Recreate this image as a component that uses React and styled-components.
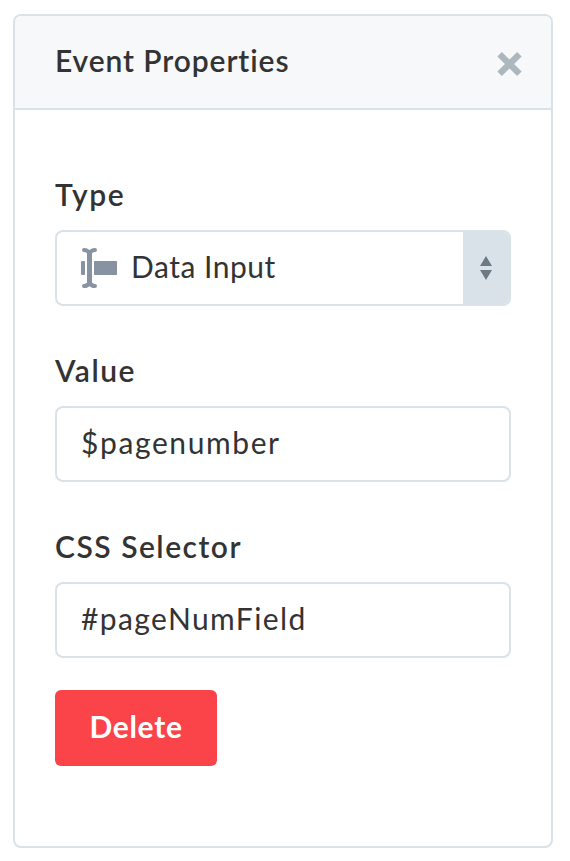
import React from "react";
import styled, { createGlobalStyle } from "styled-components";

const GlobalStyle = createGlobalStyle`
  *, *::before, *::after { box-sizing: border-box; }
  body {
    margin: 0;
    background: #fff;
    color: #333;
    font-family: Lato, "Open Sans", sans-serif;
    font-size: 30px;
  }
`;

const Page = styled.main`
  height: 861px;
  padding: 14px 17px 13px 13px;
`;

const Panel = styled.section`
  height: 834px;
  border: 2px solid #d9e2e7;
  border-radius: 8px;
  overflow: hidden;
`;

const Header = styled.header`
  display: flex;
  align-items: center;
  justify-content: space-between;
  height: 94px;
  padding: 0 28px 0 40px;
  background: #f6f8fa;
  border-bottom: 2px solid #d9e2e7;
`;

const Title = styled.h1`
  margin: 0;
  padding-bottom: 5px;
  font-size: 30px;
  line-height: 36px;
  font-weight: 600;
  letter-spacing: ${(p) => p.$track}px;
`;

const CloseButton = styled.button`
  display: flex;
  margin-top: 3px;
  padding: 0;
  border: 0;
  background: none;
  color: #adb7be;
`;

const Form = styled.form`
  display: flex;
  flex-direction: column;
  align-items: flex-start;
  padding: 64px 40px 0;
`;

const Field = styled.div`
  width: 456px;
  margin-bottom: 44px;
  &:last-of-type { margin-bottom: 32px; }
`;

const Label = styled.label`
  display: block;
  height: 56px;
  font-weight: 600;
  line-height: 36px;
  padding-top: 2px;
  letter-spacing: ${(p) => p.$track}px;
`;

const Input = styled.input`
  display: block;
  width: 100%;
  height: 76px;
  padding: 0 24px 5px;
  border: 2px solid #d9e2e7;
  border-radius: 8px;
  background: #fff;
  color: #333;
  font: inherit;
  letter-spacing: ${(p) => p.$track}px;
  outline: none;
`;

const Select = styled.div`
  display: flex;
  height: 76px;
  border: 2px solid #d9e2e7;
  border-radius: 8px;
  overflow: hidden;
`;

const SelectValue = styled.div`
  display: flex;
  flex: 1;
  align-items: center;
  gap: 14px;
  padding-left: 24px;
`;

const SelectText = styled.span`
  padding-bottom: 5px;
  line-height: 36px;
  letter-spacing: ${(p) => p.$track}px;
`;

const Stepper = styled.div`
  display: flex;
  align-items: center;
  justify-content: center;
  width: 46px;
  background: #dae2e9;
`;

const DeleteButton = styled.button`
  width: 162px;
  height: 76px;
  padding: 0 0 5px;
  border: 0;
  border-radius: 6px;
  background: #fb434a;
  color: #fff;
  font: inherit;
  font-weight: 700;
  letter-spacing: ${(p) => p.$track}px;
`;

const CloseIcon = () => (
  <svg width="26" height="26" viewBox="0 0 26 26" aria-hidden="true">
    <path d="M2.6 3.3 22.4 22.7M22.4 3.3 2.6 22.7" stroke="currentColor" strokeWidth="6.4" />
  </svg>
);

const DataInputIcon = () => (
  <svg width="36" height="40" viewBox="0 0 36 40" fill="#8793a0" aria-hidden="true">
    <rect x="0" y="13" width="4" height="14" rx="1" />
    <rect x="13" y="13" width="23" height="14" rx="0.8" />
    <path d="M8.5 5V35" stroke="#8793a0" strokeWidth="5" />
    <path
      d="M3 2C5.5 2 7 2.8 8.5 5C10 2.8 11.5 2 14 2M3 38C5.5 38 7 37.2 8.5 35C10 37.2 11.5 38 14 38"
      fill="none"
      stroke="#8793a0"
      strokeWidth="4"
      strokeLinecap="round"
      strokeLinejoin="round"
    />
  </svg>
);

const SortIcon = () => (
  <svg width="12" height="24" viewBox="0 0 12 24" fill="#6c7a84" aria-hidden="true">
    <path d="M6 0 12 10H0ZM0 14H12L6 24Z" />
  </svg>
);

export default function App() {
  return (
    <Page>
      <GlobalStyle />
      <Panel>
        <Header>
          <Title $track={0.9}>Event Properties</Title>
          <CloseButton type="button" aria-label="Close"><CloseIcon /></CloseButton>
        </Header>
        <Form>
          <Field>
            <Label $track={1.6}>Type</Label>
            <Select>
              <SelectValue>
                <DataInputIcon />
                <SelectText $track={0.5}>Data Input</SelectText>
              </SelectValue>
              <Stepper><SortIcon /></Stepper>
            </Select>
          </Field>
          <Field>
            <Label htmlFor="value" $track={1.5}>Value</Label>
            <Input id="value" defaultValue="$pagenumber" $track={1.6} />
          </Field>
          <Field>
            <Label htmlFor="selector" $track={1.5}>CSS Selector</Label>
            <Input id="selector" defaultValue="#pageNumField" $track={1.4} spellCheck={false} />
          </Field>
          <DeleteButton type="button" $track={0.7}>Delete</DeleteButton>
        </Form>
      </Panel>
    </Page>
  );
}
